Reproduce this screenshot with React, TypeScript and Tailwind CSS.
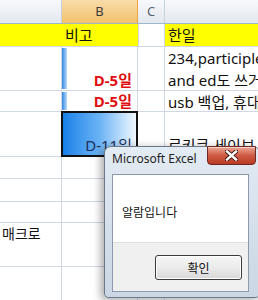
import React from 'react';

const grid = 'border-[#d0d7e5]';
const cellFont = { fontFamily: '"Noto Sans", "Open Sans", "Noto Sans CJK KR", sans-serif' };

function Header() {
  return <div className="flex h-[24px] border-b border-[#9eb6ce] text-[13px] text-[#5a6470]" style={cellFont}>
      <div className="w-[62px] bg-gradient-to-b from-[#f7f9fc] to-[#e3e8ef] border-r border-[#c5d1de]" />
      <div className="w-[76px] flex items-center justify-center bg-gradient-to-b from-[#f9dcaa] to-[#f2c26a] border-r border-[#f2a43a] text-[#3c3c3c]">B</div>
      <div className="w-[27px] flex items-center justify-center bg-gradient-to-b from-[#f7f9fc] to-[#e3e8ef] border-r border-[#c5d1de]">C</div>
      <div className="flex-1 bg-gradient-to-b from-[#f7f9fc] to-[#e3e8ef]" />
    </div>;
}

function Row({ h, a, b, d, bar, selected }: {
  h: number; a?: React.ReactNode; b?: React.ReactNode; d?: React.ReactNode; bar?: 'small' | 'full'; selected?: boolean;
}) {
  return <div className="flex text-[15px] text-[#111]" style={{ height: h, ...cellFont }}>
      <div className={`w-[62px] border-r border-b ${grid} px-[2px] leading-[22px] text-[14px] overflow-hidden`}>{a}</div>
      <div className={`relative w-[76px] border-r border-b ${grid}`}>
        {bar === 'small' && <div className="absolute left-0 top-[1px] bottom-[1px] w-[5px] bg-gradient-to-r from-[#2f86e0] to-[#b9dcfb]" />}
        {bar === 'full' && <div className="absolute inset-0 bg-gradient-to-r from-[#0f7fe8] via-[#69b3f4] to-[#f4f9fe]" />}
        {selected && <div className="absolute -left-[1px] -top-[1px] -right-[1px] -bottom-[1px] border-2 border-[#111]" />}
        <div className="relative h-full flex items-end justify-end pr-[5px] leading-[19px]">{b}</div>
      </div>
      <div className={`w-[27px] border-r border-b ${grid}`} />
      <div className={`flex-1 border-b ${grid} pl-[3px] leading-[22px] whitespace-nowrap overflow-hidden`}>{d}</div>
    </div>;
}

function Dialog() {
  return <div className="absolute left-[104px] top-[146px] w-[156px] h-[152px] rounded-t-[7px] rounded-b-[4px] border border-[#6b7888] bg-gradient-to-b from-[#e3ebf4] via-[#d6e0eb] to-[#cbd7e4] shadow-[-3px_2px_8px_rgba(0,0,0,0.35)]">
      <div className="relative h-[27px]">
        <div className="pl-[7px] pt-[3px] text-[12px] text-[#1e1e1e]" style={{ fontFamily: '"Noto Sans", sans-serif' }}>Microsoft Excel</div>
        <div className="absolute right-[3px] -top-[1px] w-[49px] h-[19px] rounded-b-[4px] border border-[#6e2a22] bg-gradient-to-b from-[#eba896] via-[#cf5a44] to-[#b93a24] flex items-center justify-center shadow-[inset_0_1px_0_rgba(255,255,255,0.5)]">
          <svg width="13" height="11" viewBox="0 0 13 11">
            <path d="M2 1.5 L11 9.5 M11 1.5 L2 9.5" stroke="#3b1510" strokeWidth="4.2" strokeLinecap="square" />
            <path d="M2 1.5 L11 9.5 M11 1.5 L2 9.5" stroke="#fff" strokeWidth="2.4" strokeLinecap="square" />
          </svg>
        </div>
      </div>
      <div className="ml-[7px] w-[137px] h-[118px] border border-[#8d9aab] bg-white flex flex-col" style={{ fontFamily: '"Noto Sans CJK KR", sans-serif' }}>
        <div className="h-[67px] pl-[9px] pt-[28px] text-[12px] text-[#111]">알람입니다</div>
        <div className="flex-1 bg-[#f0f0f0] border-t border-[#dfdfdf] pt-[12px] pl-[42px]">
          <div className="w-[87px] h-[25px] rounded-[3px] border border-[#3a3a3a] bg-gradient-to-b from-[#f6f6f6] via-[#ebebeb] to-[#d8d8d8] flex items-center justify-center text-[12px] text-[#111] shadow-[inset_0_0_0_1px_#ffffff]">확인</div>
        </div>
      </div>
    </div>;
}

export default function App() {
  const red = 'font-bold text-[#e01010] text-[15px]';
  return <div className="relative w-[258px] h-[300px] overflow-hidden bg-white">
      <Header />
      <div className="flex h-[23px] text-[15px] text-[#111] border-b border-[#d0d7e5]" style={cellFont}>
        <div className="w-[62px] bg-[#ffff00]" />
        <div className="w-[76px] bg-[#ffff00] flex items-center pl-[3px]">비고</div>
        <div className={`w-[27px] border-l border-r ${grid}`} />
        <div className="flex-1 bg-[#ffff00] pl-[3px] flex items-center">한일</div>
      </div>
      <Row h={44} bar="small" b={<span className={red}>D-5일</span>} d={<div className="flex flex-col"><span>234,participle</span><span>and ed도 쓰거</span></div>} />
      <Row h={21} bar="small" b={<span className={red}>D-5일</span>} d="usb 백업, 휴대" />
      <Row h={45} bar="full" selected b={<span className="text-[#1c2f5c] text-[15px] pb-[1px]">D-11일</span>} d={<div className="h-full flex items-end">르키큐 세이브</div>} />
      <Row h={22} />
      <Row h={23} />
      <Row h={21} />
      <Row h={44} a="매크로" />
      <Row h={44} />
      <Dialog />
    </div>;
}
